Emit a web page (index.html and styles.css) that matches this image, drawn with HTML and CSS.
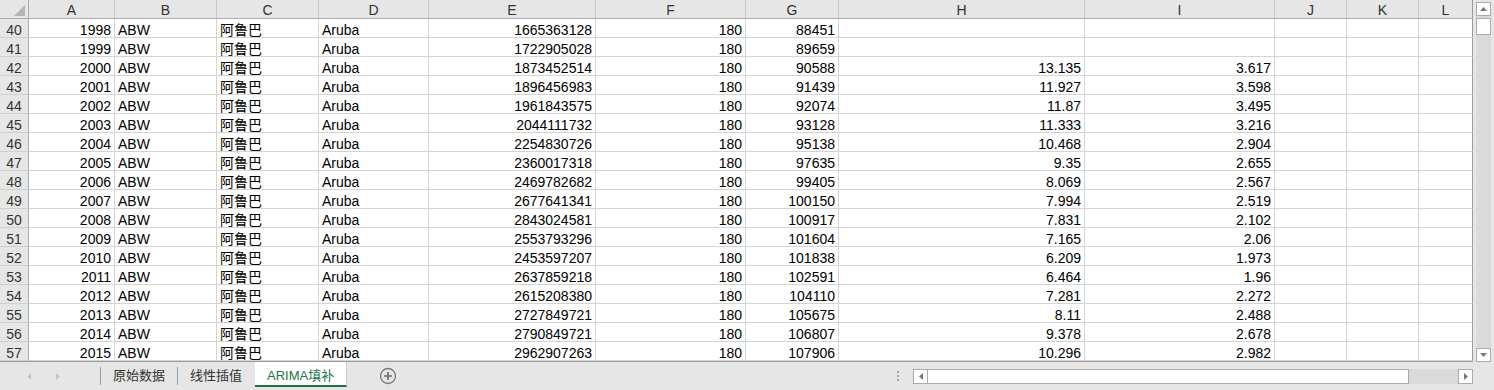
FILE: index.html
```html
<!DOCTYPE html>
<html>
	<head>
		<meta charset="utf-8" />
		<link rel="stylesheet" href="styles.css">
	</head>

	<body>
		<div class="workbook">
			<div class="main">
				<div class="sheet">
					<div class="corner">
						<svg width="12" height="12" viewBox="0 0 12 12"><polygon points="11,0 11,11 0,11" fill="#b4b4b4" /></svg>
					</div>
					<div class="ch">A</div><div class="ch">B</div><div class="ch">C</div><div class="ch">D</div><div class="ch">E</div><div class="ch">F</div>
					<div class="ch">G</div><div class="ch">H</div><div class="ch">I</div><div class="ch">J</div><div class="ch">K</div><div class="ch">L</div>

					<div class="rh">40</div><div class="r">1998</div><div>ABW</div><div>阿鲁巴</div><div>Aruba</div><div class="r">1665363128</div><div class="r">180</div><div class="r">88451</div><div class="r"></div><div class="r"></div><div></div><div></div><div></div>
					<div class="rh">41</div><div class="r">1999</div><div>ABW</div><div>阿鲁巴</div><div>Aruba</div><div class="r">1722905028</div><div class="r">180</div><div class="r">89659</div><div class="r"></div><div class="r"></div><div></div><div></div><div></div>
					<div class="rh">42</div><div class="r">2000</div><div>ABW</div><div>阿鲁巴</div><div>Aruba</div><div class="r">1873452514</div><div class="r">180</div><div class="r">90588</div><div class="r">13.135</div><div class="r">3.617</div><div></div><div></div><div></div>
					<div class="rh">43</div><div class="r">2001</div><div>ABW</div><div>阿鲁巴</div><div>Aruba</div><div class="r">1896456983</div><div class="r">180</div><div class="r">91439</div><div class="r">11.927</div><div class="r">3.598</div><div></div><div></div><div></div>
					<div class="rh">44</div><div class="r">2002</div><div>ABW</div><div>阿鲁巴</div><div>Aruba</div><div class="r">1961843575</div><div class="r">180</div><div class="r">92074</div><div class="r">11.87</div><div class="r">3.495</div><div></div><div></div><div></div>
					<div class="rh">45</div><div class="r">2003</div><div>ABW</div><div>阿鲁巴</div><div>Aruba</div><div class="r">2044111732</div><div class="r">180</div><div class="r">93128</div><div class="r">11.333</div><div class="r">3.216</div><div></div><div></div><div></div>
					<div class="rh">46</div><div class="r">2004</div><div>ABW</div><div>阿鲁巴</div><div>Aruba</div><div class="r">2254830726</div><div class="r">180</div><div class="r">95138</div><div class="r">10.468</div><div class="r">2.904</div><div></div><div></div><div></div>
					<div class="rh">47</div><div class="r">2005</div><div>ABW</div><div>阿鲁巴</div><div>Aruba</div><div class="r">2360017318</div><div class="r">180</div><div class="r">97635</div><div class="r">9.35</div><div class="r">2.655</div><div></div><div></div><div></div>
					<div class="rh">48</div><div class="r">2006</div><div>ABW</div><div>阿鲁巴</div><div>Aruba</div><div class="r">2469782682</div><div class="r">180</div><div class="r">99405</div><div class="r">8.069</div><div class="r">2.567</div><div></div><div></div><div></div>
					<div class="rh">49</div><div class="r">2007</div><div>ABW</div><div>阿鲁巴</div><div>Aruba</div><div class="r">2677641341</div><div class="r">180</div><div class="r">100150</div><div class="r">7.994</div><div class="r">2.519</div><div></div><div></div><div></div>
					<div class="rh">50</div><div class="r">2008</div><div>ABW</div><div>阿鲁巴</div><div>Aruba</div><div class="r">2843024581</div><div class="r">180</div><div class="r">100917</div><div class="r">7.831</div><div class="r">2.102</div><div></div><div></div><div></div>
					<div class="rh">51</div><div class="r">2009</div><div>ABW</div><div>阿鲁巴</div><div>Aruba</div><div class="r">2553793296</div><div class="r">180</div><div class="r">101604</div><div class="r">7.165</div><div class="r">2.06</div><div></div><div></div><div></div>
					<div class="rh">52</div><div class="r">2010</div><div>ABW</div><div>阿鲁巴</div><div>Aruba</div><div class="r">2453597207</div><div class="r">180</div><div class="r">101838</div><div class="r">6.209</div><div class="r">1.973</div><div></div><div></div><div></div>
					<div class="rh">53</div><div class="r">2011</div><div>ABW</div><div>阿鲁巴</div><div>Aruba</div><div class="r">2637859218</div><div class="r">180</div><div class="r">102591</div><div class="r">6.464</div><div class="r">1.96</div><div></div><div></div><div></div>
					<div class="rh">54</div><div class="r">2012</div><div>ABW</div><div>阿鲁巴</div><div>Aruba</div><div class="r">2615208380</div><div class="r">180</div><div class="r">104110</div><div class="r">7.281</div><div class="r">2.272</div><div></div><div></div><div></div>
					<div class="rh">55</div><div class="r">2013</div><div>ABW</div><div>阿鲁巴</div><div>Aruba</div><div class="r">2727849721</div><div class="r">180</div><div class="r">105675</div><div class="r">8.11</div><div class="r">2.488</div><div></div><div></div><div></div>
					<div class="rh">56</div><div class="r">2014</div><div>ABW</div><div>阿鲁巴</div><div>Aruba</div><div class="r">2790849721</div><div class="r">180</div><div class="r">106807</div><div class="r">9.378</div><div class="r">2.678</div><div></div><div></div><div></div>
					<div class="rh">57</div><div class="r">2015</div><div>ABW</div><div>阿鲁巴</div><div>Aruba</div><div class="r">2962907263</div><div class="r">180</div><div class="r">107906</div><div class="r">10.296</div><div class="r">2.982</div><div></div><div></div><div></div>
				</div>

				<div class="vscroll">
					<div class="vtrack">
						<div class="sbtn"><svg width="7" height="4" viewBox="0 0 7 4"><polygon points="3.5,0 7,4 0,4" fill="#777" /></svg></div>
						<div class="vthumb"></div>
						<div class="vspace"></div>
						<div class="sbtn"><svg width="7" height="4" viewBox="0 0 7 4"><polygon points="0,0 7,0 3.5,4" fill="#777" /></svg></div>
					</div>
				</div>
			</div>

			<div class="tabbar">
				<div class="nav">
					<svg width="4" height="7" viewBox="0 0 4 7"><polygon points="4,0 4,7 0,3.5" fill="#c4c4c4" /></svg>
					<svg width="4" height="7" viewBox="0 0 4 7"><polygon points="0,0 4,3.5 0,7" fill="#c4c4c4" /></svg>
				</div>
				<div class="sep"></div>
				<div class="tab">原始数据</div>
				<div class="sep"></div>
				<div class="tab">线性插值</div>
				<div class="tab active">ARIMA填补</div>
				<div class="add">
					<svg width="18" height="18" viewBox="0 0 18 18">
						<circle cx="9" cy="9" r="7.5" fill="none" stroke="#7a7a7a" stroke-width="1.3" />
						<path d="M9 5v8M5 9h8" stroke="#6a6a6a" stroke-width="1.6" />
					</svg>
				</div>
				<div class="fill"></div>
				<div class="dots"><span></span><span></span><span></span></div>
				<div class="hscroll">
					<div class="sbtn hbtn"><svg width="4" height="7" viewBox="0 0 4 7"><polygon points="4,0 4,7 0,3.5" fill="#777" /></svg></div>
					<div class="hthumb"></div>
					<div class="sbtn hbtn"><svg width="4" height="7" viewBox="0 0 4 7"><polygon points="0,0 4,3.5 0,7" fill="#777" /></svg></div>
				</div>
			</div>
		</div>
	</body>
</html>
```

FILE: styles.css
```css
body {
    margin: 0;
    font-family: "Liberation Sans", "Noto Sans CJK SC", sans-serif;
    font-size: 14px;
    color: #000;
    background-color: #fff;
}

.workbook {
    width: 1494px;
    height: 390px;
    display: flex;
    flex-direction: column;
    overflow: hidden;
}

.main {
    display: flex;
    height: 362px;
}

/* grid of cells */
.sheet {
    display: grid;
    grid-template-columns: 29px 86px 102px 102px 110px 167px 150px 93px 246px 190px 72px 72px 54px;
    grid-auto-rows: 19px;
    width: 1473px;
    height: 362px;
    box-sizing: border-box;
    border-bottom: 1px solid #9b9b9b;
    overflow: hidden;
}

.sheet > div {
    box-sizing: border-box;
    border-right: 1px solid #d4d4d4;
    border-bottom: 1px solid #d4d4d4;
    padding: 4px 3px 0 3px;
    line-height: 14px;
    white-space: nowrap;
    overflow: hidden;
}

.sheet > div:nth-child(13n) {
    border-right-color: #9b9b9b;
}

.sheet > .r { text-align: right; }

.sheet > .corner {
    background-color: #e6e6e6;
    border-right-color: #ababab;
    border-bottom-color: #ababab;
    padding: 5px 0 0 14px;
}

.corner svg { display: block; }

.sheet > .ch {
    background-color: #e6e6e6;
    border-right-color: #c8c8c8;
    border-bottom-color: #ababab;
    text-align: center;
    color: #333;
    padding-top: 3px;
}

.sheet > .rh {
    background-color: #e6e6e6;
    border-right-color: #ababab;
    border-bottom-color: #cfcfcf;
    text-align: center;
    color: #333;
    padding-left: 0;
    padding-right: 0;
}

/* scrollbars */
.vscroll {
    width: 21px;
    background-color: #e6e6e6;
    padding: 2px 3px 0 3px;
    box-sizing: border-box;
}

.vtrack {
    height: 100%;
    background-color: #dadada;
    display: flex;
    flex-direction: column;
}

.sbtn {
    width: 15px;
    height: 14px;
    box-sizing: border-box;
    background-color: #fff;
    border: 1px solid #ababab;
    display: flex;
    align-items: center;
    justify-content: center;
}

.vthumb {
    height: 17px;
    margin-top: 2px;
    background-color: #fff;
    border: 1px solid #ababab;
    box-sizing: border-box;
}

.vspace { flex: 1; }

.tabbar {
    height: 28px;
    display: flex;
    align-items: center;
    background-color: #e6e6e6;
    font-size: 13px;
    color: #333;
}

.nav {
    width: 100px;
    display: flex;
    gap: 25px;
    padding-left: 27px;
    box-sizing: border-box;
}

.sep {
    width: 1px;
    height: 18px;
    background-color: #9c9c9c;
}

.tab {
    height: 25px;
    margin-bottom: 3px;
    padding: 0 12px;
    display: flex;
    align-items: center;
    box-sizing: border-box;
}

.tab.active {
    align-self: flex-start;
    height: 25px;
    margin-left: 1px;
    background-color: #fff;
    color: #217346;
    border-bottom: 2px solid #217346;
    border-right: 1px solid #cfcfcf;
    padding-top: 1px;
}

.add {
    margin-left: 32px;
    display: flex;
}

.fill { flex: 1; }

.dots {
    display: flex;
    flex-direction: column;
    gap: 2px;
    margin-right: 14px;
}

.dots span {
    width: 2px;
    height: 2px;
    background-color: #a8a8a8;
}

.hscroll {
    width: 560px;
    height: 15px;
    margin-right: 21px;
    display: flex;
    background-color: #dadada;
}

.hbtn {
    height: 15px;
}

.hthumb {
    width: 481px;
    background-color: #fff;
    border: 1px solid #ababab;
    border-left: none;
    box-sizing: border-box;
    margin-right: auto;
}
```
